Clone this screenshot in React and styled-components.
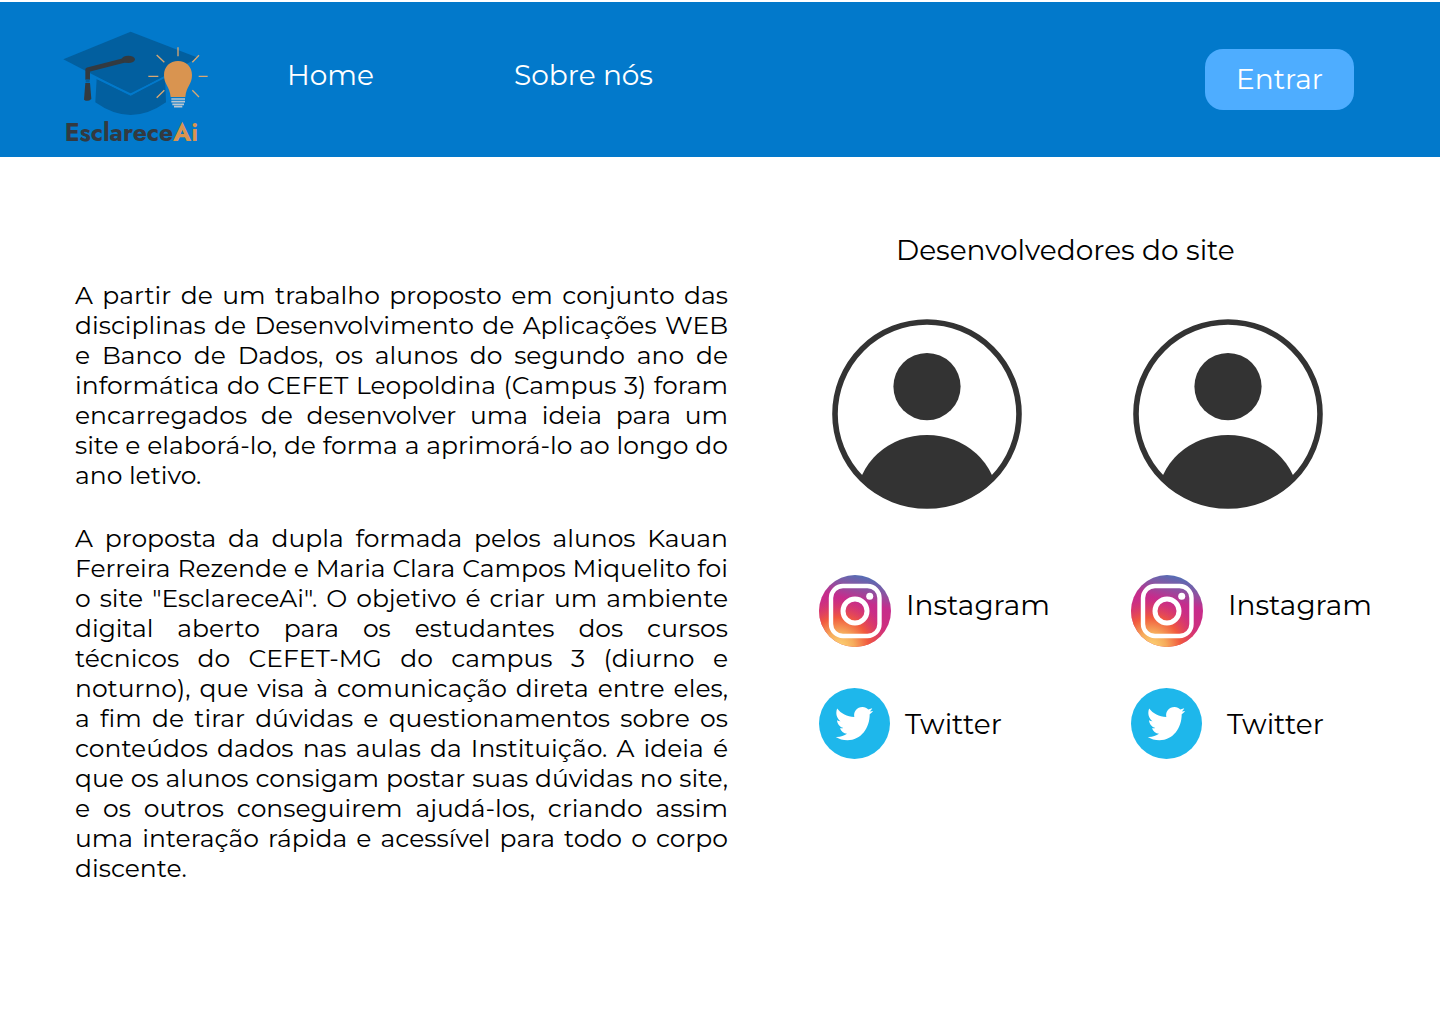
import React, { useId } from "react";
import styled, { createGlobalStyle } from "styled-components";

const GlobalStyle = createGlobalStyle`
  * { box-sizing: border-box; }
  body {
    margin: 0;
    background: #fff;
    color: #000;
    font-family: Montserrat, Inter, "Liberation Sans", sans-serif;
  }
  h2, p { margin: 0; font-weight: 400; }
  a { color: inherit; text-decoration: none; }
`;

const Header = styled.header`
  display: flex;
  align-items: center;
  min-height: 155px;
  margin-top: 2px;
  padding: 0 86px 0 60px;
  background: #0279cb;
  color: #fff;
  font-size: 28px;
`;

const LogoLink = styled.a`
  display: block;
  padding-top: 25px;
`;

const Nav = styled.nav`
  display: flex;
  flex: 1;
  padding: 0 0 10px 77px;
`;

const NavLink = styled.a`
  min-width: 227px;
  line-height: 36px;
`;

const LoginButton = styled.button`
  padding: 12px 30px 13px;
  min-width: 149px;
  border: 0;
  border-radius: 18px;
  background: #4eadff;
  color: #fff;
  font: inherit;
  line-height: 36px;
  cursor: pointer;
`;

const Main = styled.main`
  display: grid;
  grid-template-columns: 653fr 553fr;
  column-gap: 91px;
  padding: 75px 68px 75px 75px;
`;

const About = styled.article`
  display: flex;
  flex-direction: column;
  gap: 33px;
  padding-top: 48px;
  font-size: 25px;
  line-height: 30px;
  text-align: justify;
`;

const Team = styled.section`
  font-size: 28px;
`;

const TeamTitle = styled.h2`
  padding-left: 77px;
  font-size: 28px;
  line-height: 36px;
`;

const Avatars = styled.div`
  display: flex;
  gap: 111px;
  padding: 51px 0 0 13px;
`;

const Socials = styled.div`
  display: grid;
  grid-template-columns: 312fr 241fr;
  row-gap: 41px;
  padding-top: 66px;
`;

const SocialLink = styled.a`
  display: flex;
  align-items: center;
  gap: ${({ $wide }) => ($wide ? 25 : 15)}px;
  line-height: 36px;
`;

const SocialLabel = styled.span`
  padding-bottom: ${({ $lift }) => ($lift ? 12 : 0)}px;
`;

const Icon = styled.svg`
  flex: none;
  display: block;
`;

function Logo() {
  return (
    <Icon width="150" height="130" viewBox="30 24 450 390" role="img" aria-label="EsclareceAi">
      <path d="M140 180L242 230L345 174L348 250Q242 326 136 250Z" fill="#025f9f" />
      <path d="M40 121L242 38L444 116L242 226Z" fill="#025f9f" />
      <path d="M140 177L242 226L345 174" fill="none" stroke="#0279cb" strokeWidth="5" />
      <path d="M113 182V152L236 121" fill="none" stroke="#333a40" strokeWidth="14" strokeLinejoin="round" />
      <ellipse cx="235" cy="121" rx="20" ry="11" fill="#333a40" />
      <path d="M106 192H120L124 240Q113 250 102 242Z" fill="#333a40" />
      <path d="M107 186H119" stroke="#025f9f" strokeWidth="9" />
      <path d="M342 168C342 143 360 126 384 126S426 143 426 168C426 198 409 200 406 234H362C359 200 342 198 342 168Z" fill="#d99450" />
      <path d="M384 85V112M320 108L343 130M447 109L427 130M295 172H325M446 172H473M343 214L320 236M427 214L447 234" stroke="#d9a873" strokeWidth="4" fill="none" />
      <path d="M364 240H405M364 248H405M367 256H402M372 263H397" stroke="#b9c6d0" strokeWidth="5" />
      <text x="44" y="365" fontFamily='Jost, "League Spartan", Lato, sans-serif' fontWeight="700" fontSize="74" fill="#333a40">
        Esclarece<tspan fill="#d99450">Ai</tspan>
      </text>
    </Icon>
  );
}

function Avatar() {
  const clip = useId();
  return (
    <Icon width="190" height="190" viewBox="0 0 190 190" role="img" aria-label="Desenvolvedor">
      <clipPath id={clip}>
        <circle cx="95" cy="95" r="94" />
      </clipPath>
      <circle cx="95" cy="95" r="92" fill="#fff" stroke="#333" strokeWidth="5.6" />
      <circle cx="95" cy="67.6" r="33.6" fill="#333" />
      <ellipse cx="95" cy="180" rx="70" ry="64" fill="#333" clipPath={`url(#${clip})`} />
    </Icon>
  );
}

function InstagramIcon() {
  const id = useId();
  return (
    <Icon width="72" height="72" viewBox="0 0 72 72" aria-hidden="true">
      <defs>
        <linearGradient id={`${id}a`} x1="0.7" y1="0" x2="0.45" y2="1">
          <stop offset="0" stopColor="#4a72b8" />
          <stop offset="0.16" stopColor="#7e5ba6" />
          <stop offset="0.38" stopColor="#c62c8c" />
          <stop offset="0.7" stopColor="#d0307c" />
          <stop offset="1" stopColor="#e04a58" />
        </linearGradient>
        <radialGradient id={`${id}b`} cx="0.28" cy="1" r="0.68">
          <stop offset="0" stopColor="#fdd576" />
          <stop offset="0.3" stopColor="#f6ac5c" />
          <stop offset="0.6" stopColor="#f15a3e" />
          <stop offset="1" stopColor="#e03a60" stopOpacity="0" />
        </radialGradient>
      </defs>
      <circle cx="36" cy="36" r="36" fill={`url(#${id}a)`} />
      <circle cx="36" cy="36" r="36" fill={`url(#${id}b)`} />
      <rect x="12" y="11" width="48.5" height="50" rx="12" fill="none" stroke="#fff" strokeWidth="4.4" />
      <circle cx="36" cy="36" r="12" fill="none" stroke="#fff" strokeWidth="5" />
      <circle cx="50.7" cy="21.3" r="3.5" fill="#fff" />
    </Icon>
  );
}

function TwitterIcon() {
  return (
    <Icon width="71" height="71" viewBox="0 0 71 71" aria-hidden="true">
      <circle cx="35.5" cy="35.5" r="35.5" fill="#1eb7eb" />
      <path
        fill="#fff"
        d="M18.2 20.5C22 25.5 28 28.8 35.3 29C34.3 23.5 38 19 43.5 19C46 19 47.8 20 49.3 21.6L53.2 20.2C52.7 21.6 51.8 22.7 50.8 23.4L54.2 22.9C53.2 24.3 52 25.3 50.7 26.3C50.8 40 42 52.3 28.5 52.3C24 52.3 20 51 16.7 49C21 49.3 25 48 28 45.8C24.5 45.5 22 43.2 21 40.2C22.2 40.5 23.4 40.4 24.4 40C20.7 39 18.2 35.8 18 32.2C19.1 32.8 20.3 33.2 21.6 33.3C17.8 30.5 16.2 25.3 18.2 20.5Z"
      />
    </Icon>
  );
}

export default function App() {
  return (
    <>
      <GlobalStyle />
      <Header>
        <LogoLink href="#home"><Logo /></LogoLink>
        <Nav>
          <NavLink href="#home">Home</NavLink>
          <NavLink href="#sobre">Sobre nós</NavLink>
        </Nav>
        <LoginButton type="button">Entrar</LoginButton>
      </Header>
      <Main>
        <About>
          <p>
            A partir de um trabalho proposto em conjunto das disciplinas de Desenvolvimento de
            Aplicações WEB e Banco de Dados, os alunos do segundo ano de informática do CEFET
            Leopoldina (Campus 3) foram encarregados de desenvolver uma ideia para um site e
            elaborá-lo, de forma a aprimorá-lo ao longo do ano letivo.
          </p>
          <p>
            A proposta da dupla formada pelos alunos Kauan Ferreira Rezende e Maria Clara Campos
            Miquelito foi o site "EsclareceAi". O objetivo é criar um ambiente digital aberto para
            os estudantes dos cursos técnicos do CEFET-MG do campus 3 (diurno e noturno), que visa à
            comunicação direta entre eles, a fim de tirar dúvidas e questionamentos sobre os
            conteúdos dados nas aulas da Instituição. A ideia é que os alunos consigam postar suas
            dúvidas no site, e os outros conseguirem ajudá-los, criando assim uma interação rápida e
            acessível para todo o corpo discente.
          </p>
        </About>
        <Team>
          <TeamTitle>Desenvolvedores do site</TeamTitle>
          <Avatars>
            <Avatar />
            <Avatar />
          </Avatars>
          <Socials>
            <SocialLink href="#instagram-1"><InstagramIcon /><SocialLabel $lift>Instagram</SocialLabel></SocialLink>
            <SocialLink href="#instagram-2" $wide><InstagramIcon /><SocialLabel $lift>Instagram</SocialLabel></SocialLink>
            <SocialLink href="#twitter-1"><TwitterIcon /><SocialLabel>Twitter</SocialLabel></SocialLink>
            <SocialLink href="#twitter-2" $wide><TwitterIcon /><SocialLabel>Twitter</SocialLabel></SocialLink>
          </Socials>
        </Team>
      </Main>
    </>
  );
}
